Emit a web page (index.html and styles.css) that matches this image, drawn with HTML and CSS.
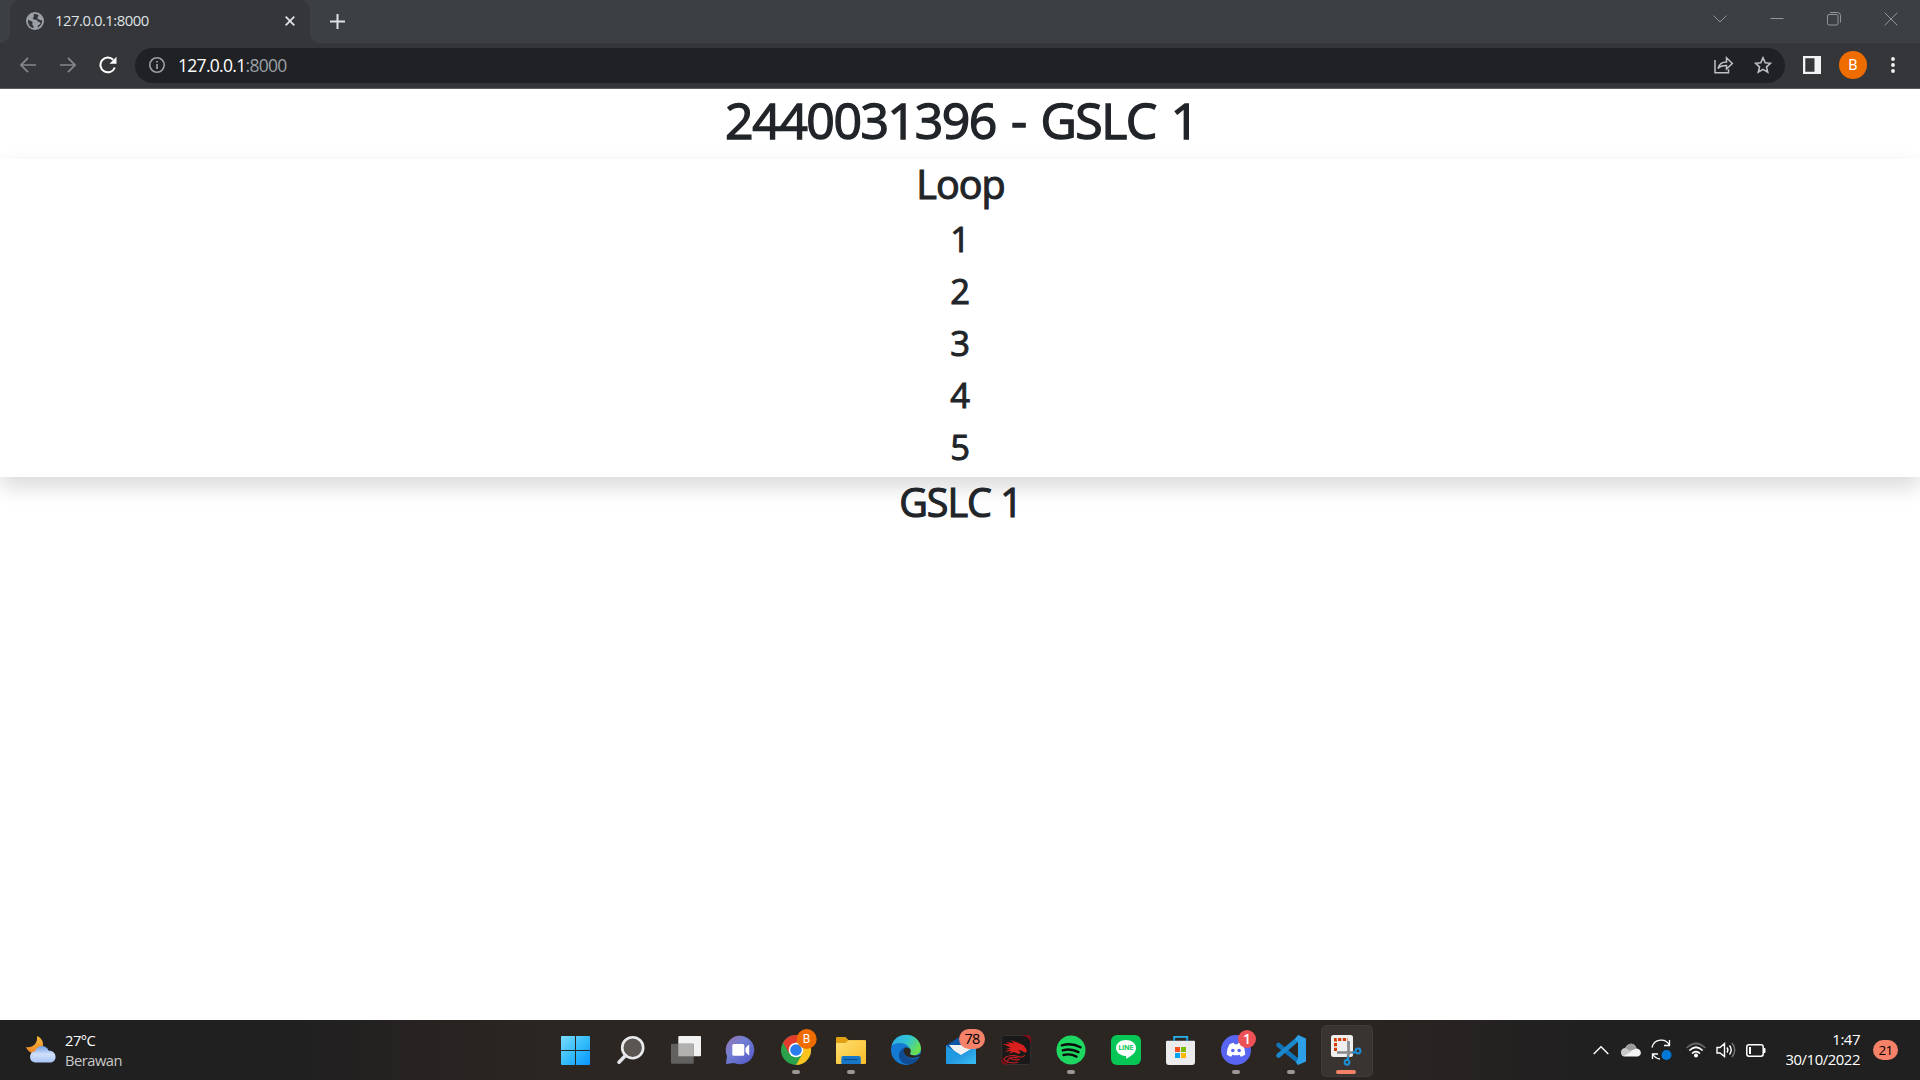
FILE: index.html
```html
<!DOCTYPE html>
<html lang="en">
<head>
<meta charset="utf-8">
<title>127.0.0.1:8000</title>
<link rel="stylesheet" href="styles.css">
</head>
<body>
<header class="browser">
  <div class="tabstrip">
    <div class="tab">
      <svg class="favicon" width="18" height="18" viewBox="0 0 18 18"><circle cx="9" cy="9" r="9" fill="#9aa0a6"/><path d="M2 7.500C3 9 6 8.500 6.500 10C7 11.500 5.500 12 7 13.500C8 14.500 7.500 15.500 7.500 16C4 15.500 1.500 12.500 2 7.500ZM8 2C7 3.500 8.500 4 7.500 5C6.500 6 6.500 6.500 8 7.500C9.500 8 11 7 11.500 9C12 10.500 14 9.500 14.500 11C14.500 12.500 12.500 12.500 11.500 14.500L12 15.500C15 14 16.500 11 16 8C14.500 9 13.500 7.500 12 7C10.500 6.500 12.500 5 12.500 3C11 2 9.500 1.800 8 2Z" fill="#35363a"/></svg>
      <span class="tab-title">127.0.0.1:8000</span>
      <svg class="tab-close" width="10" height="10" viewBox="0 0 10 10"><path d="M.7.7l8.600 8.600M9.300.7L.7 9.300" stroke="#dee1e6" stroke-width="1.800"/></svg>
    </div>
    <svg class="new-tab" width="15" height="15" viewBox="0 0 15 15"><path d="M7.500 0v15M0 7.500h15" stroke="#dee1e6" stroke-width="2"/></svg>
    <div class="window-controls">
      <svg width="14" height="14" viewBox="0 0 14 14"><path d="M.5 3.500L7 10l6.500-6.500"/></svg>
      <svg width="14" height="14" viewBox="0 0 14 14"><path d="M.5 6.500h13"/></svg>
      <svg width="14" height="14" viewBox="0 0 14 14"><rect x=".5" y="2.500" width="10.500" height="10.500" rx="1.500"/><path d="M3 .5h7.500a3 3 0 0 1 3 3V10.500"/></svg>
      <svg width="14" height="14" viewBox="0 0 14 14"><path d="M.7.7l12.600 12.600M13.300.7L.7 13.300"/></svg>
    </div>
  </div>
  <div class="toolbar">
    <svg class="nav" width="16" height="16" viewBox="0 0 16 16" fill="none" stroke="#85878a" stroke-width="1.700"><path d="M16 8H1.200M8 .8L1 8l7 7.200"/></svg>
    <svg class="nav" width="16" height="16" viewBox="0 0 16 16" fill="none" stroke="#85878a" stroke-width="1.700"><path d="M0 8h14.800M8 .8L15 8l-7 7.200"/></svg>
    <svg class="nav" width="18" height="18" viewBox="0 0 18 18"><path d="M15.800 11.500A7.400 7.400 0 1 1 14.200 3.800" fill="none" stroke="#fff" stroke-width="2"/><path d="M17.500.8v7h-7z" fill="#fff"/></svg>
    <div class="omnibox">
      <svg width="16" height="16" viewBox="0 0 16 16"><circle cx="8" cy="8" r="7.200" fill="none" stroke="#9aa0a6" stroke-width="1.600"/><path d="M8 7v5M8 4v1.600" stroke="#9aa0a6" stroke-width="1.700"/></svg>
      <span class="url">127.0.0.1<span class="port">:8000</span></span>
      <svg class="share" width="20" height="18" viewBox="0 0 20 18" fill="none" stroke="#bdc1c6" stroke-width="1.500"><path d="M1 4v12.800h13.500v-3.500M4 12.500c1-4 3.500-6.500 8.500-6.500V1.800l5.800 5.700-5.800 5.500V9.500c-4 0-6.500.5-8.500 3z"/></svg>
      <svg width="18" height="18" viewBox="0 0 18 18"><path d="M9 1.800l2.200 5 5.300.5-4 3.600 1.200 5.300L9 13.400l-4.700 2.800 1.200-5.300-4-3.600 5.300-.5z" fill="none" stroke="#bdc1c6" stroke-width="1.600"/></svg>
    </div>
    <svg class="panel" width="18" height="18" viewBox="0 0 18 18"><path fill="#f1f3f4" fill-rule="evenodd" d="M0 0h18v18H0zM2.300 2.300v13.400h9.200V2.300z"/></svg>
    <span class="profile">B</span>
    <svg class="menu" width="4" height="16" viewBox="0 0 4 16" fill="#f1f3f4"><circle cx="2" cy="2" r="1.900"/><circle cx="2" cy="8" r="1.900"/><circle cx="2" cy="14" r="1.900"/></svg>
  </div>
</header>

<main class="page">
  <h1 class="title">2440031396 - GSLC 1</h1>
  <section class="card">
    <h2 class="heading">Loop</h2>
    <h3 class="item">1</h3>
    <h3 class="item">2</h3>
    <h3 class="item">3</h3>
    <h3 class="item">4</h3>
    <h3 class="item">5</h3>
  </section>
  <h2 class="heading">GSLC 1</h2>
</main>

<footer class="taskbar">
  <div class="weather">
    <svg width="30" height="27" viewBox="0 0 30 27">
      <defs><linearGradient id="moon" x1="0" y1="0" x2="0" y2="1"><stop offset="0" stop-color="#f8bc3c"/><stop offset="1" stop-color="#ef8324"/></linearGradient><linearGradient id="cloud" x1="0" y1="0" x2="0" y2="1"><stop offset="0" stop-color="#6f9de5"/><stop offset=".5" stop-color="#d0e0fb"/><stop offset="1" stop-color="#a9c6f6"/></linearGradient></defs>
      <path d="M11 0c6 2.500 8 9 4 14-4 5-12 4.500-15-3 7 1.500 12-4 11-11z" fill="url(#moon)"/>
      <path d="M9 26.500a5.700 5.700 0 0 1 0-11.300C11 8.500 20.500 8 22.500 14.500c9 0 9.500 12 1 12z" fill="url(#cloud)"/>
    </svg>
    <div class="weather-text"><span>27°C</span><span class="condition">Berawan</span></div>
  </div>

  <nav class="apps">
    <div class="app"><svg viewBox="0 0 55 60"><defs><linearGradient id="win" gradientUnits="userSpaceOnUse" x1="13" y1="16" x2="42" y2="45"><stop offset="0" stop-color="#7cdcfc"/><stop offset=".5" stop-color="#36bdfa"/><stop offset="1" stop-color="#0795ff"/></linearGradient></defs><path fill="url(#win)" d="M14 16h13v14H13V17q0-1 1-1zM28 16h13q1 0 1 1v13H28zM13 31h14v14H14q-1 0-1-1zM28 31h14v13q0 1-1 1H28z"/></svg></div>
    <div class="app"><svg viewBox="0 0 55 60"><circle cx="29.700" cy="27.700" r="10.500" fill="#5c5652" stroke="#e9eaec" stroke-width="2.600"/><path d="M22.500 35.500l-6.500 6.700" stroke="#e2e4e8" stroke-width="3.600" stroke-linecap="round"/></svg></div>
    <div class="app"><svg viewBox="0 0 55 60"><rect x="20.300" y="16" width="22.700" height="20.300" rx="1" fill="#f2f2f2"/><rect x="13" y="23.700" width="22.700" height="20" rx="1" fill="#626160"/><rect x="20.300" y="23.700" width="15.400" height="12.600" fill="#b2b1b0"/></svg></div>
    <div class="app"><svg viewBox="0 0 55 60"><defs><linearGradient id="chat" x1="0" y1="0" x2="1" y2="1"><stop offset="0" stop-color="#9673ac"/><stop offset=".4" stop-color="#7380d3"/><stop offset="1" stop-color="#5054c7"/></linearGradient></defs><path d="M13 44l1-8A14.300 14.300 0 1 1 21 43z" fill="url(#chat)"/><rect x="19.300" y="24" width="12" height="11.700" rx="1.500" fill="#fff"/><path d="M32.500 28l3-3.200q.7-.5.700.5v9.400q0 1-.7.500L32.500 32z" fill="#fff"/></svg></div>
    <div class="app running"><svg viewBox="0 0 55 60"><circle cx="28" cy="30" r="15" fill="#2ba24c"/><path d="M15 22.500A15 15 0 0 1 41 22.500H28L21.500 34z" fill="#e33b2e"/><path d="M41 22.500A15 15 0 0 1 28 45l6.500-11.300L28 22.500z" fill="#fcc31e"/><circle cx="28" cy="30" r="7.300" fill="#fff"/><circle cx="28" cy="30" r="5.800" fill="#2a7cec"/><circle cx="38.700" cy="19" r="10" fill="#ef6c00"/></svg><span class="badge badge-profile">B</span></div>
    <div class="app running"><svg viewBox="0 0 55 60"><defs><linearGradient id="folder" x1="0" y1="0" x2="1" y2="1"><stop offset="0" stop-color="#ffdf72"/><stop offset="1" stop-color="#fabd27"/></linearGradient></defs><path d="M13 18q0-1 1-1h8.500l3 3h16q1.500 0 1.500 1.500V25H13z" fill="#e2a114"/><path d="M13 23h9.500l3-2.800H42q1 0 1 1V43q0 1-1 1H14q-1 0-1-1z" fill="url(#folder)"/><path d="M18.300 44v-6q0-2 2-2h15.500q2 0 2 2v6z" fill="#1676c7"/><path d="M21 39.500h14" stroke="#0d4b86"/></svg></div>
    <div class="app"><svg viewBox="0 0 55 60"><defs><linearGradient id="edge" x1="0" y1="0" x2="1" y2=".5"><stop offset="0" stop-color="#2ba5e8"/><stop offset=".55" stop-color="#32c5d4"/><stop offset="1" stop-color="#69e04e"/></linearGradient></defs><circle cx="28" cy="30" r="15" fill="#1479d3"/><path d="M13.500 26C17 10 42 11 43 28.500c0 6-6 8-11 6-1.500-.8-.5-1.500 0-3.500 1-7-12-11-18.500-5z" fill="url(#edge)"/><path d="M24 29c-7 7-1 17 9 15 4-1 7-4 8.500-7-7 4-15 1-15.500-6q0-2 1.200-3.800z" fill="#104c94"/><path d="M27 27.500c-3.500 4 .5 10 6.500 10.500 4 .2 7-1.500 8-1.500l2.500-4c-4 5-14 3-11.500 0 1-2 0-5.500-5.500-5z" fill="#2c2623"/></svg></div>
    <div class="app"><svg viewBox="0 0 55 60"><defs><linearGradient id="mail" x1="0" y1="0" x2="1" y2="1"><stop offset="0" stop-color="#1674cb"/><stop offset="1" stop-color="#38c0f5"/></linearGradient></defs><path d="M13 25.500L28 16l15 9.500V35H13z" fill="#0d56a4"/><path d="M16 25h24v9l-12 5z" fill="#f1f1f1"/><path d="M13 25.500L28 35l15-9V43q0 1-1 1H14q-1 0-1-1z" fill="#2099e1"/><path d="M14 44L43 26v17q0 1-1 1z" fill="url(#mail)"/></svg><span class="badge badge-mail">78</span></div>
    <div class="app"><svg viewBox="0 0 55 60"><rect x="13.700" y="15.500" width="29" height="29" rx="3" fill="#191919" stroke="#343232"/><path d="M34 15h6q3 0 3 3v7q-1-5-3-7-2-1.500-6-3zM13.500 36q1 4 3 6l5 2.500h-5q-3 0-3-3z" fill="#7c0e18"/><path d="M14.700 24l7 .3-3.500-2.300 8 1.300-3.500-3.300 8 3 5 2.500 2.500 3.500.7 3-2.200.5-3.500-2-3-.5 2.500 2.500-2 1.500-4.500-2-5.500 1.500 3-2.500-7 .5 6-2.500-5-.5 5-1z" fill="#d9201e"/><path d="M37 35c-1.500 2-4 2.500-6.500 1.500M31 37c-5-2.500-13-1.500-15 1.500 1 4 9 5.500 14 3.500M20 41c-1-3 5-4.500 10-3M22 38.500q4 2 10 1" fill="none" stroke="#c91c20" stroke-width="1.100"/></svg></div>
    <div class="app running"><svg viewBox="0 0 55 60"><circle cx="28" cy="30" r="14.500" fill="#1ed760"/><path d="M18.800 25.300c6-1.700 13-1.200 18.700 2M19.700 30.300c5-1.500 11-.8 15.800 1.800M20.500 35c4.500-1.200 9-.6 13 1.600" fill="none" stroke="#0b0b0b" stroke-linecap="round" stroke-width="2.400"/></svg></div>
    <div class="app"><svg viewBox="0 0 55 60"><rect x="13" y="15" width="30" height="30" rx="6" fill="#06c755"/><path d="M28 20c5.500 0 10 3.500 10 8 0 5-5 8-10 11 .3-1.500.5-3-.5-3-5-.5-9.500-3.500-9.500-8 0-4.500 4.500-8 10-8z" fill="#fff"/></svg><span class="line-label">LINE</span></div>
    <div class="app"><svg viewBox="0 0 55 60"><path d="M21.200 25v-8.200h13V25" fill="none" stroke="#29b5eb" stroke-width="1.800"/><path d="M13 21.700q0-1 1-1h27q1 0 1 1V42q0 3-3 3H16q-3 0-3-3z" fill="#ececec"/><path d="M21.200 20.700v-2M34.200 20.700v-2" stroke="#168bd0" stroke-width="1.800"/><path fill="#f25022" d="M22 27h5v5h-5z"/><path fill="#7fba00" d="M28 27h5v5h-5z"/><path fill="#00a4ef" d="M22 33h5v5h-5z"/><path fill="#ffb900" d="M28 33h5v5h-5z"/></svg></div>
    <div class="app running"><svg viewBox="0 0 55 60"><circle cx="28" cy="30" r="15" fill="#5865f2"/><path d="M21.500 24.300q2.500-1.300 4.300-1.500l.7 1.400h3l.7-1.400q1.800.2 4.300 1.500 3 5 2.800 10.200-2.300 1.800-4.500 2.200l-1.200-2q-3.600 1-7.200 0l-1.200 2q-2.200-.4-4.500-2.200-.2-5.200 2.800-10.200z" fill="#fff"/><circle cx="24.800" cy="30.500" r="1.800" fill="#5865f2"/><circle cx="31.200" cy="30.500" r="1.800" fill="#5865f2"/></svg><span class="badge badge-discord">1</span></div>
    <div class="app running"><svg viewBox="0 0 55 60"><path d="M15.500 25L35 41" stroke="#1173b8" stroke-width="4.500" stroke-linecap="round"/><path d="M15.500 35.500L36 18" stroke="#1b88cc" stroke-width="4.500" stroke-linecap="round"/><path d="M35 15l8 3.500v23L35 45l-2-2.500 2-4V22l-3-3z" fill="#2c9fe6"/></svg></div>
    <div class="app active"><svg viewBox="0 0 55 60"><rect x="13" y="15" width="22" height="22" rx="2.500" fill="#efefef"/><path d="M17.500 31V19.500H30" fill="none" stroke="#d83b01" stroke-width="3" stroke-dasharray="3.200 1.500"/><path d="M30.500 21v13l-1 4M19 32.500h17" fill="none" stroke="#85898d" stroke-width="2.700"/><g fill="none" stroke="#1c90d8" stroke-width="2"><circle cx="40" cy="31" r="2.400"/><circle cx="29" cy="42.300" r="2.400"/><path d="M37.600 32l-3.300.7M29.500 40l1-3.500"/></g></svg></div>
  </nav>

  <div class="tray">
    <svg class="chevron" width="16" height="10" viewBox="0 0 16 10"><path d="M.7 9L8 1.700 15.300 9" fill="none" stroke="#fff" stroke-width="1.400"/></svg>
    <svg class="cloud" width="20" height="14" viewBox="0 0 20 14"><path d="M3 13.500C-1 12.500-.5 5.500 4.200 5.200 6.500-.5 14-1 15.500 5.500c5 0 6 7 1.500 8z" fill="#f5f5f5"/><path d="M4.200 5.200C6.500-.5 14-1 15.500 5.500L9 8z" fill="#9b9b9b"/><path d="M4.200 5.200L10.500 8.500 3 13Q0 12 0 9 .2 5.500 4.200 5.200z" fill="#c8c8c8"/></svg>
    <svg class="sync" width="21" height="22" viewBox="0 0 21 22"><path d="M1 8.500C3-.5 15-1.500 18.500 6.500M18.500 1v5.500H13M9 20C5 19.500 3 17.500 1.500 15M1.500 20v-5H7" fill="none" stroke="#fff" stroke-width="1.300"/><circle cx="15.500" cy="16" r="5" fill="#0078d7"/></svg>
    <svg class="wifi" width="20" height="16" viewBox="0 0 20 16" fill="none" stroke="#fff" stroke-width="1.700"><path d="M.7 6Q10-3 19.300 6" stroke="#666"/><path d="M3.300 8.500q6.700-6.500 13.400 0M6 11.500q4-4 8 0"/><circle cx="10" cy="13.500" r="1.200" fill="#fff"/></svg>
    <svg class="sound" width="21" height="18" viewBox="0 0 21 18" fill="none" stroke="#fff" stroke-width="1.400"><path d="M1 6.500h3L8.500 2.500v13L4 12H1zM11 6.500q1.800 2.500 0 5M13.500 4.500q3.500 4.500 0 9"/><path d="M16 2q5.500 7 0 14" stroke="#777"/></svg>
    <svg class="battery" width="20" height="13" viewBox="0 0 20 13"><rect x=".8" y=".8" width="16.400" height="11.400" rx="2.200" fill="none" stroke="#fff" stroke-width="1.500"/><path d="M17.500 4.500h1.500v4h-1.500" fill="#fff" stroke="#fff"/><path d="M3 3h2v7H3z" fill="#fff"/></svg>
    <div class="clock"><span class="time">1:47</span><span class="date">30/10/2022</span></div>
    <span class="notifications">21</span>
  </div>
</footer>
</body>
</html>
```
FILE: styles.css
```css
* { box-sizing: border-box; }

body {
  margin: 0;
  width: 1920px;
  height: 1080px;
  display: flex;
  flex-direction: column;
  overflow: hidden;
  background: #fff;
  color: #212529;
  font-family: "Open Sans", "Noto Sans", sans-serif;
}

svg { display: block; flex: none; }

/* Browser chrome */
.browser {
  flex: none;
  height: 89px;
  background: #35363a;
  border-bottom: 1px solid #5b5c5f;
}

.tabstrip {
  height: 43px;
  display: flex;
  padding-left: 10px;
  background: #3c4043;
}

.tab {
  position: relative;
  width: 300px;
  display: flex;
  align-items: center;
  padding: 0 15px 1px 16px;
  border-radius: 10px 10px 0 0;
  background: #35363a;
}

.tab::before,
.tab::after {
  content: "";
  position: absolute;
  bottom: 0;
  width: 10px;
  height: 10px;
}

.tab::before {
  left: -10px;
  background: radial-gradient(circle at 0 0, transparent 9.500px, #35363a 10px);
}

.tab::after {
  right: -10px;
  background: radial-gradient(circle at 100% 0, transparent 9.500px, #35363a 10px);
}

.tab-title {
  flex: 1;
  margin-left: 11px;
  padding-bottom: 2px;
  font-size: 14.900px;
  line-height: 20px;
  letter-spacing: -0.500px;
  color: #dfe1e5;
}

.new-tab { margin: 14px 0 0 20px; }

.window-controls {
  display: flex;
  gap: 43px;
  margin: 12px 22px 0 auto;
  fill: none;
  stroke: #94979a;
}

.toolbar {
  height: 44px;
  display: flex;
  align-items: center;
  padding: 0 25px 0 20px;
}

.nav { margin-right: 24px; }
.nav:nth-child(2) { margin-right: 23px; }
.nav:nth-child(3) { margin-right: 18px; }

.omnibox {
  width: 1650px;
  height: 35px;
  display: flex;
  align-items: center;
  padding: 0 13px 0 14px;
  border-radius: 18px;
  background: #202124;
}

.url {
  margin-left: 13px;
  font-size: 17.500px;
  line-height: 24px;
  letter-spacing: -0.700px;
  color: #fff;
}

.port { color: #9aa0a6; }
.share { margin: 0 20px 0 auto; }
.panel { margin-left: 18px; }

.profile {
  width: 28px;
  height: 28px;
  margin: 0 24px 0 18px;
  border-radius: 50%;
  background: #ef6c00;
  color: #fff;
  font: 15px/28px Roboto, sans-serif;
  text-align: center;
}

/* Page */
.page {
  flex: 1;
  text-align: center;
}

.title,
.heading,
.item {
  margin: 0 0 10px;
  font-weight: 500;
  line-height: 1.200;
}

.title {
  height: 60px;
  padding: 1px 0 0 3px;
  font-size: 50px;
  letter-spacing: -1.500px;
  word-spacing: 3.500px;
  -webkit-text-stroke: 1.400px;
}

.heading {
  height: 48px;
  padding: 2px 0 0 1px;
  font-size: 39.500px;
  letter-spacing: -1px;
  -webkit-text-stroke: 1.100px;
}

.item {
  height: 42px;
  padding-top: 1px;
  font-size: 34.500px;
  -webkit-text-stroke: 1px;
}

.card {
  display: flow-root;
  box-shadow: 0 10px 20px rgba(0, 0, 0, .15);
}

/* Taskbar */
.taskbar {
  flex: none;
  height: 60px;
  display: grid;
  grid-template-columns: 548px 825px 1fr;
  background: linear-gradient(90deg, #202020 0, #212020 300px, #2c2623 560px, #2c2623 1300px, #212020 1580px, #202020 100%);
  color: #fff;
}

.weather {
  display: flex;
  align-items: center;
  padding: 0 0 2px 26px;
}

.weather-text {
  display: flex;
  flex-direction: column;
  margin: 2px 0 0 9px;
  font-size: 14.700px;
  line-height: 20px;
  letter-spacing: -0.500px;
}

.condition { color: #c9c9c9; }

.apps { display: flex; }

.app {
  position: relative;
  width: 55px;
  height: 60px;
}

.app svg {
  position: relative;
  width: 55px;
  height: 60px;
}

.running::after {
  content: "";
  position: absolute;
  left: 24px;
  top: 50px;
  width: 8px;
  height: 4px;
  border-radius: 2px;
  background: #9b9794;
}

.active::before {
  content: "";
  position: absolute;
  left: 3px;
  top: 5px;
  width: 50px;
  height: 50px;
  border: 1px solid #403b38;
  border-radius: 5px;
  background: #393431;
}

.active::after {
  content: "";
  position: absolute;
  left: 18px;
  top: 50px;
  width: 20px;
  height: 4px;
  border-radius: 2px;
  background: #f58268;
}

.badge {
  position: absolute;
  text-align: center;
}

.badge-profile {
  left: 28px;
  top: 9px;
  width: 21px;
  font: 12px/20px Roboto, sans-serif;
}

.badge-mail {
  left: 26px;
  top: 9px;
  width: 26px;
  height: 20px;
  border-radius: 10px;
  background: #f58268;
  color: #000;
  font-size: 14.500px;
  line-height: 20px;
  letter-spacing: -0.700px;
}

.badge-discord {
  left: 30px;
  top: 10px;
  width: 18px;
  height: 18px;
  border-radius: 50%;
  background: #ee5257;
  font-size: 14px;
  font-weight: 600;
  line-height: 18px;
}

.line-label {
  position: absolute;
  left: 18px;
  top: 23px;
  width: 20px;
  color: #06c755;
  font: bold 6.800px/10px Inter, sans-serif;
  text-align: center;
}

.tray {
  display: flex;
  align-items: center;
  padding-left: 220px;
}

.cloud { margin-left: 12px; }
.sync { margin-left: 10px; }
.wifi { margin-left: 14px; }
.sound { margin-left: 10px; }
.battery { margin-left: 9px; }

.clock {
  width: 84px;
  display: flex;
  flex-direction: column;
  margin: 0 0 2px 10px;
  font-size: 14.900px;
  line-height: 20px;
  letter-spacing: -0.450px;
  text-align: right;
}

.notifications {
  width: 25px;
  height: 20px;
  margin-left: 13px;
  border-radius: 10px;
  background: #f58268;
  color: #000;
  font-size: 13.500px;
  line-height: 20px;
  letter-spacing: -0.600px;
  text-align: center;
}
```
